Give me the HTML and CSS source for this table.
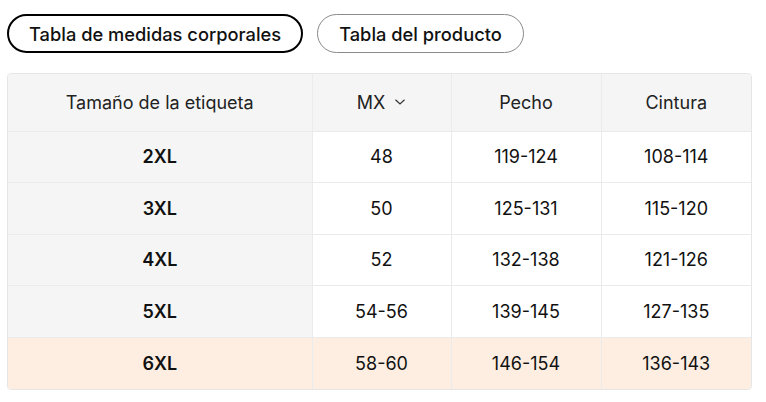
FILE: index.html
```html
<!DOCTYPE html>
<html lang="es">
<head>
<meta charset="utf-8">
<link rel="stylesheet" href="styles.css">
</head>
<body>
<div class="page">
  <div class="tabs">
    <button class="tab active">Tabla de medidas corporales</button>
    <button class="tab">Tabla del producto</button>
  </div>
  <div class="table-wrap">
    <table class="sizes">
      <colgroup>
        <col class="c1"><col class="c2"><col class="c3"><col class="c4">
      </colgroup>
      <thead>
        <tr>
          <th>Tamaño de la etiqueta</th>
          <th><span class="unit">MX <svg class="chev" width="12" height="8" viewBox="0 0 12 8"><path d="M1.5 1.8 L6 6 L10.5 1.8" fill="none" stroke="#333" stroke-width="1.2"/></svg></span></th>
          <th>Pecho</th>
          <th>Cintura</th>
        </tr>
      </thead>
      <tbody>
        <tr><td class="size">2XL</td><td>48</td><td>119-124</td><td>108-114</td></tr>
        <tr><td class="size">3XL</td><td>50</td><td>125-131</td><td>115-120</td></tr>
        <tr><td class="size">4XL</td><td>52</td><td>132-138</td><td>121-126</td></tr>
        <tr><td class="size">5XL</td><td>54-56</td><td>139-145</td><td>127-135</td></tr>
        <tr class="hl"><td class="size">6XL</td><td>58-60</td><td>146-154</td><td>136-143</td></tr>
      </tbody>
    </table>
  </div>
</div>
</body>
</html>
```

FILE: styles.css
```css
* { box-sizing: border-box; }
html, body { margin: 0; padding: 0; background: #fff; }
body {
  font-family: "Inter", "Noto Sans", sans-serif;
  color: #111;
}
.page {
  padding: 14px 14px 0 7px;
}
.tabs {
  display: flex;
  gap: 14px;
}
.tab {
  font-family: inherit;
  font-size: 18.3px;
  font-weight: 500;
  color: #111;
  background: #fff;
  height: 39px;
  padding: 0 20px;
  border: 1px solid #8a8a8a;
  border-radius: 20px;
  cursor: pointer;
}
.tab + .tab {
  padding: 0 21px;
}
.tab.active {
  border: 2px solid #000;
}
.table-wrap {
  margin-top: 20px;
  width: 745px;
  border: 1px solid #e6e6e6;
  border-radius: 4px;
  overflow: hidden;
}
.sizes {
  width: 100%;
  border-collapse: collapse;
  table-layout: fixed;
  font-size: 18px;
}
.c1 { width: 304px; }
.c2 { width: 139px; }
.c3 { width: 150px; }
.c4 { width: auto; }
.sizes th, .sizes td {
  text-align: center;
  border: 1px solid #ebebeb;
  padding: 0;
}
.sizes tr > :first-child { border-left: none; }
.sizes tr > :last-child { border-right: none; }
.sizes thead th { border-top: none; }
.sizes tbody tr:last-child td { border-bottom: none; }
.sizes th {
  height: 57px;
  background: #f5f5f5;
  font-weight: 400;
  color: #222;
}
.sizes td {
  height: 51.5px;
  background: #fff;
}
.sizes td.size {
  background: #f5f5f5;
  font-weight: 600;
}
.sizes tr.hl td {
  background: #fdeee1;
}
.unit {
  display: inline-flex;
  align-items: center;
  gap: 9px;
}
.chev { display: block; }
```
